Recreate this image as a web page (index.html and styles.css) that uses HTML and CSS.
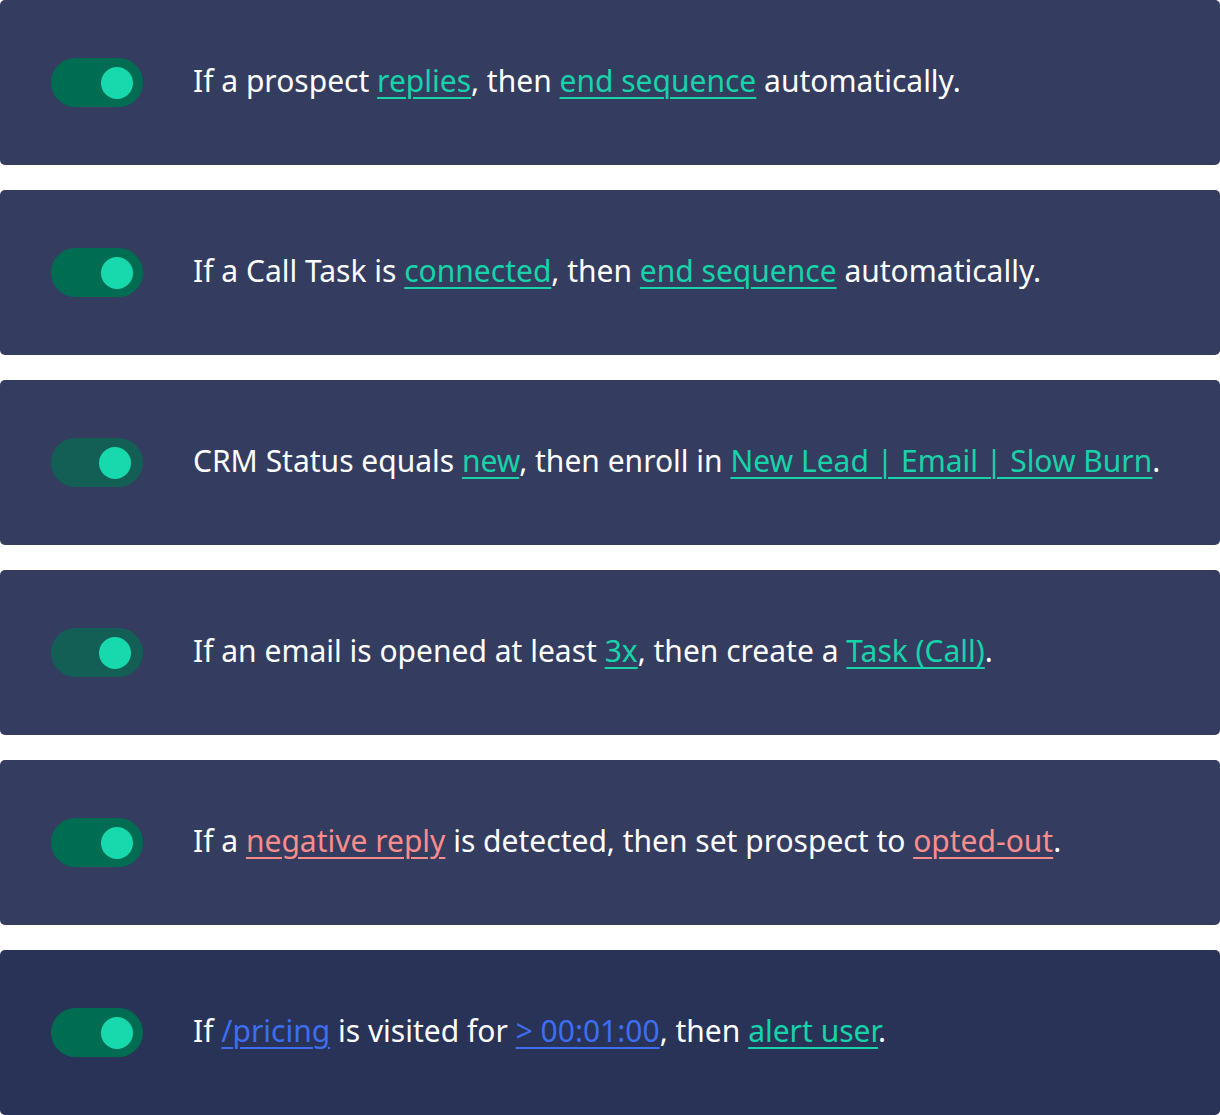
FILE: index.html
```
<!DOCTYPE html>
<html>
<head>
<meta charset="utf-8">
<link rel="stylesheet" href="styles.css">
</head>
<body>
<div class="list">
  <div class="card">
    <div class="toggle"><span class="knob"></span></div>
    <p class="rule">If a prospect <a class="lk teal">replies</a>, then <a class="lk teal">end sequence</a> automatically.</p>
  </div>
  <div class="card">
    <div class="toggle"><span class="knob"></span></div>
    <p class="rule">If a Call Task is <a class="lk teal">connected</a>, then <a class="lk teal">end sequence</a> automatically.</p>
  </div>
  <div class="card">
    <div class="toggle dim"><span class="knob"></span></div>
    <p class="rule">CRM Status equals <a class="lk teal">new</a>, then enroll in <a class="lk teal">New Lead | Email | Slow Burn</a>.</p>
  </div>
  <div class="card">
    <div class="toggle dim"><span class="knob"></span></div>
    <p class="rule">If an email is opened at least <a class="lk teal">3x</a>, then create a <a class="lk teal">Task (Call)</a>.</p>
  </div>
  <div class="card">
    <div class="toggle"><span class="knob"></span></div>
    <p class="rule">If a <a class="lk pink">negative reply</a> is detected, then set prospect to <a class="lk pink">opted-out</a>.</p>
  </div>
  <div class="card dark">
    <div class="toggle"><span class="knob"></span></div>
    <p class="rule">If <a class="lk blue">/pricing</a> is visited for <a class="lk blue">&gt; 00:01:00</a>, then <a class="lk teal">alert user</a>.</p>
  </div>
</div>
</body>
</html>
```
FILE: styles.css
```
html, body {
  margin: 0;
  padding: 0;
  background: #ffffff;
}
body {
  font-family: "Noto Sans", "Open Sans", sans-serif;
}
.list {
  display: flex;
  flex-direction: column;
  gap: 25px;
  width: 1220px;
}
.card {
  height: 165px;
  background: #343c5f;
  border-radius: 5px;
  display: flex;
  align-items: center;
  padding-left: 51px;
  box-sizing: border-box;
}
.card.dark {
  background: #283357;
}
.toggle {
  width: 92px;
  height: 49px;
  border-radius: 25px;
  background: #006d52;
  display: flex;
  align-items: center;
  justify-content: flex-end;
  padding-right: 10px;
  box-sizing: border-box;
  flex-shrink: 0;
}
.toggle.dim {
  background: #135e55;
  padding-right: 12px;
}
.knob {
  width: 32px;
  height: 32px;
  border-radius: 50%;
  background: #17d9ad;
}
.rule {
  margin: 0 0 4px 50px;
  color: #ffffff;
  font-size: 30px;
  line-height: 40px;
  white-space: nowrap;
}
.lk {
  text-decoration: underline;
  text-decoration-thickness: 2px;
  text-underline-offset: 5px;
}
.teal { color: #17d3a9; }
.pink { color: #f88c8c; }
.blue { color: #3e6ef0; }
```
